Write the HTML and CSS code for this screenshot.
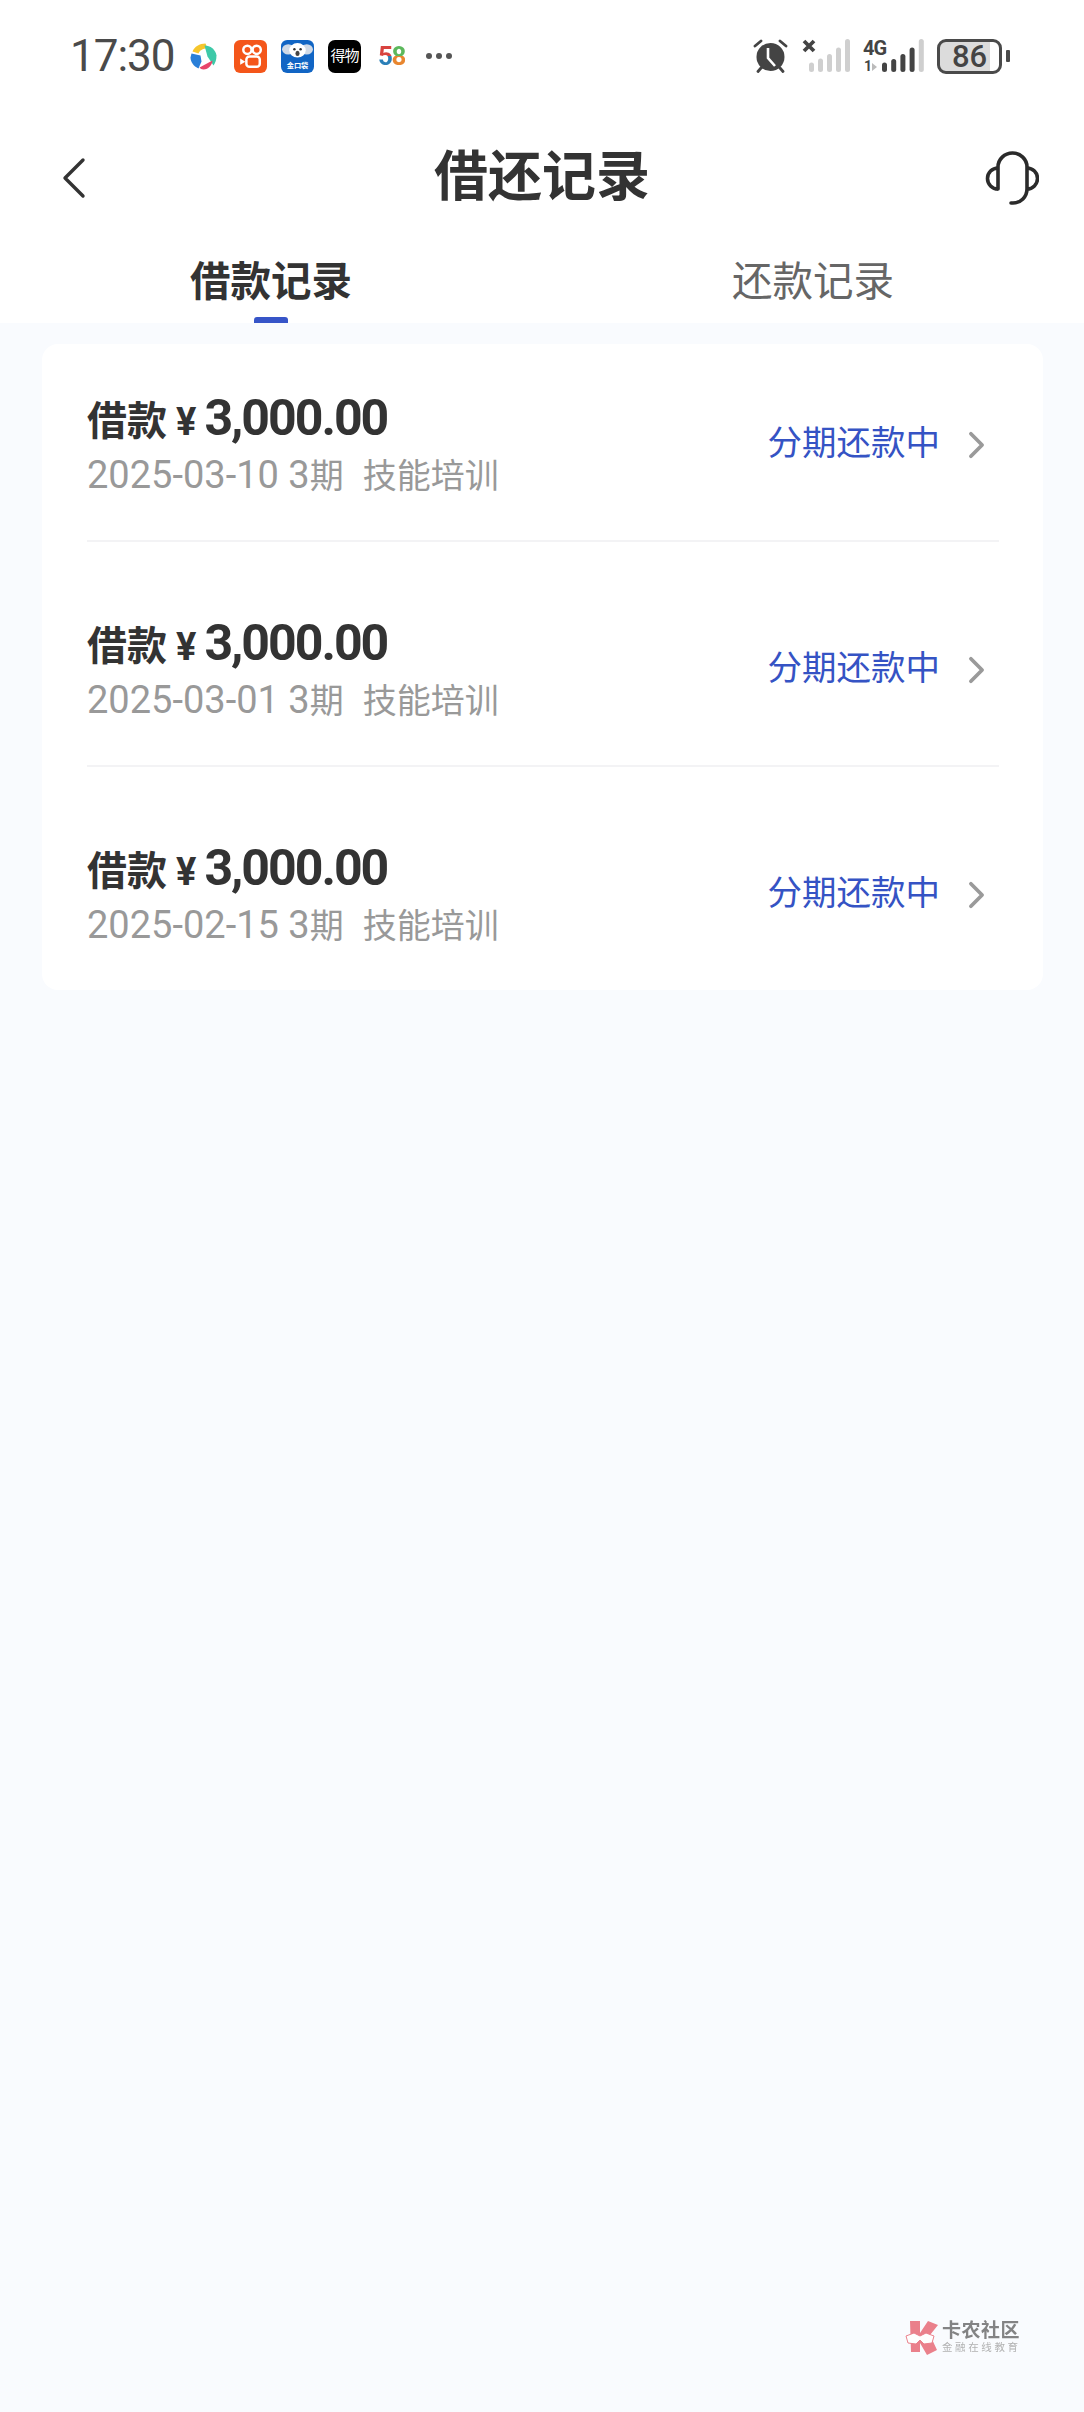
FILE: index.html
```html
<!DOCTYPE html>
<html lang="zh">
<head>
<meta charset="utf-8">
<title>借还记录</title>
<link rel="stylesheet" href="styles.css">
</head>
<body>
<div class="top">
  <div class="status">
    <span class="time">17:30</span>
    <div class="apps">
      <svg class="app" viewBox="-3.500 -3.500 33 33"><path d="M2 8C4 3 9 0 15 0l2 5c-5 0-8 2-9 5z" fill="#f6c62c"/><path d="M14 2c6 0 11 4 12 10 0 4-1 7-3 10l-6-9z" fill="#3ec9a8"/><path d="M9 24l13-7c0 4-4 9-9 9-2 0-3-1-4-2z" fill="#e8456a"/><path d="M1 10l9 2 1 6-3 7c-5-2-8-7-8-11z" fill="#2a7fd8"/></svg>
      <svg class="app" viewBox="0 0 32 32"><rect width="32" height="32" rx="6" fill="#f4561a"/><circle cx="13" cy="9.500" r="4" fill="none" stroke="#fff" stroke-width="2.400"/><circle cx="22" cy="9.500" r="4" fill="none" stroke="#fff" stroke-width="2.400"/><rect x="12" y="16" width="13" height="10" rx="3" fill="none" stroke="#fff" stroke-width="2.400"/><path d="M6 18l5 3-5 3z" fill="#fff"/></svg>
      <svg class="app" viewBox="0 0 32 32"><rect width="32" height="32" rx="6" fill="#1165c4"/><ellipse cx="7" cy="9" rx="6" ry="5" fill="#cfd9e6"/><ellipse cx="25" cy="9" rx="6" ry="5" fill="#cfd9e6"/><ellipse cx="16" cy="10" rx="8" ry="7" fill="#fff"/><circle cx="13" cy="9" r="1.200" fill="#333"/><circle cx="19" cy="9" r="1.200" fill="#333"/><ellipse cx="16" cy="13" rx="2" ry="2.500" fill="#444"/><text class="bag" x="16" y="27" text-anchor="middle">金口袋</text></svg>
      <div class="app dewu">得物</div>
      <div class="app fifty"><span class="five">5</span><span class="eight">8</span></div>
      <div class="dots"><i></i><i></i><i></i></div>
    </div>
    <div class="sys">
      <svg class="alarm" viewBox="0 0 35 34"><path d="M2 7l6-5M33 7l-6-5" stroke="#444" stroke-width="2.800" stroke-linecap="round"/><circle cx="17.500" cy="18" r="14" fill="#444"/><path d="M8 29l-3 3.500M27 29l3 3.500" stroke="#444" stroke-width="2.800" stroke-linecap="round"/><path d="M15 9v10l7 8" fill="none" stroke="#fff" stroke-width="2.600"/></svg>
      <svg class="sig1" viewBox="0 0 48 34"><path d="M2 2l10 10M12 2L2 12" stroke="#444" stroke-width="3.800"/><g fill="#cfcfcf"><rect x="7" y="23.500" width="5" height="9.500" rx="2.500"/><rect x="16" y="19.500" width="5" height="13.500" rx="2.500"/><rect x="25" y="15" width="5" height="18" rx="2.500"/><rect x="34" y="8.500" width="5" height="24.500" rx="2.500"/><rect x="43" y="0" width="5" height="33" rx="2.500"/></g></svg>
      <div class="net">
        <span class="fourg">4G</span>
        <span class="one">1</span>
        <i class="arrow"></i>
        <svg class="sig2" viewBox="0 0 42 34"><g fill="#444"><rect x="0" y="23.500" width="5" height="9.500" rx="2.500"/><rect x="9.200" y="20" width="5" height="13" rx="2.500"/><rect x="18.400" y="15" width="5" height="18" rx="2.500"/><rect x="27.600" y="8.500" width="5" height="24.500" rx="2.500"/></g><rect x="36.800" y="0" width="5" height="33" rx="2.500" fill="#cfcfcf"/></svg>
      </div>
      <div class="battery"><div class="cell">86</div><i class="nub"></i></div>
    </div>
  </div>
  <div class="nav">
    <svg class="back" viewBox="0 0 24 42"><path d="M21 3L3 21l18 18" fill="none" stroke="#333" stroke-width="3.400" stroke-linecap="round" stroke-linejoin="round"/></svg>
    <h1>借还记录</h1>
    <svg class="head" viewBox="0 0 54 55"><path d="M13 38V16a14.500 14 0 0 1 29 0v22a14 14 0 0 1-14 14h-2" fill="none" stroke="#2b2b2b" stroke-width="3.600" stroke-linecap="round"/><path d="M13 17a10.500 10.500 0 0 0 0 21M42 17a10.500 10.500 0 0 1 0 21" fill="none" stroke="#2b2b2b" stroke-width="3.600"/></svg>
  </div>
  <div class="tabs">
    <div class="tab on">借款记录<i class="bar"></i></div>
    <div class="tab">还款记录</div>
  </div>
</div>
<div class="list">
  <div class="row">
    <div class="info">
      <div class="amt"><span class="lab">借款</span><span class="yen">¥</span><span class="num">3,000.00</span></div>
      <div class="meta"><span>2025-03-10 3<span class="cn">期</span></span><span class="cn">技能培训</span></div>
    </div>
    <span class="st">分期还款中</span>
    <svg class="go" viewBox="0 0 18 30"><path d="M3 3l12 12L3 27" fill="none" stroke="#9a9a9a" stroke-width="4" stroke-linecap="round" stroke-linejoin="round"/></svg>
  </div>
  <div class="row">
    <div class="info">
      <div class="amt"><span class="lab">借款</span><span class="yen">¥</span><span class="num">3,000.00</span></div>
      <div class="meta"><span>2025-03-01 3<span class="cn">期</span></span><span class="cn">技能培训</span></div>
    </div>
    <span class="st">分期还款中</span>
    <svg class="go" viewBox="0 0 18 30"><path d="M3 3l12 12L3 27" fill="none" stroke="#9a9a9a" stroke-width="4" stroke-linecap="round" stroke-linejoin="round"/></svg>
  </div>
  <div class="row">
    <div class="info">
      <div class="amt"><span class="lab">借款</span><span class="yen">¥</span><span class="num">3,000.00</span></div>
      <div class="meta"><span>2025-02-15 3<span class="cn">期</span></span><span class="cn">技能培训</span></div>
    </div>
    <span class="st">分期还款中</span>
    <svg class="go" viewBox="0 0 18 30"><path d="M3 3l12 12L3 27" fill="none" stroke="#9a9a9a" stroke-width="4" stroke-linecap="round" stroke-linejoin="round"/></svg>
  </div>
</div>
<div class="mark">
  <svg class="mark-ico" viewBox="0 0 36 36"><path d="M5 1h10v12L23 1l10 4-8 10 7 15-10 5-7-12v9H6z" fill="#e9737f"/><path d="M1 16l8-3 6 3 6-3 8 3-2 7-8 1-4-4-4 4-8-1z" fill="#fff" stroke="#e9737f" stroke-width="1"/></svg>
  <div class="mark-t"><span class="m1">卡农社区</span><span class="m2">金融在线教育</span></div>
</div>
</body>
</html>
```
FILE: styles.css
```css
* { box-sizing: border-box; margin: 0; padding: 0; }
html, body { width: 1084px; height: 2412px; overflow: hidden; }
body { background: #f9fbfe; font-family: Roboto, "Noto Sans CJK SC", sans-serif; color: #333; position: relative; }
.top { background: #fff; height: 323px; display: flex; flex-direction: column; }
.status { height: 112px; display: flex; align-items: center; padding: 0 74px 0 70px; flex: none; }
.time { font-size: 44px; color: #4a4a4a; width: 117px; letter-spacing: -1px; }
.apps { display: flex; align-items: center; gap: 14px; }
.app { width: 33px; height: 33px; display: block; flex: none; }
.bag { font: 700 7px "Noto Sans CJK SC", sans-serif; fill: #fff; }
.dewu { background: #000; color: #fff; border-radius: 7px; font-size: 15px; line-height: 33px; text-align: center; white-space: nowrap; overflow: hidden; letter-spacing: -1px; }
.fifty { font: 700 26px/33px Roboto, sans-serif; text-align: center; letter-spacing: -1.500px; }
.five, .eight { -webkit-background-clip: text; background-clip: text; color: transparent; }
.five { background-image: linear-gradient(#d8433f 50%, #2a7fb8 50%); }
.eight { background-image: linear-gradient(#5cb85c 50%, #e8862f 50%); }
.dots { display: flex; gap: 4px; margin-left: 4px; }
.dots i { width: 6px; height: 6px; border-radius: 50%; background: #555; }
.sys { margin-left: auto; display: flex; align-items: center; }
.alarm { width: 35px; height: 34px; margin-right: 14px; }
.sig1 { width: 48px; height: 34px; margin-right: 13px; }
.net { position: relative; width: 61px; height: 34px; margin-right: 13px; }
.fourg { position: absolute; left: 0; top: -1px; font: 700 20px/20px Roboto, sans-serif; color: #444; letter-spacing: -1px; }
.one { position: absolute; left: 1px; top: 20px; font: 700 14px/14px Roboto, sans-serif; color: #444; }
.arrow { position: absolute; left: 9px; top: 24px; border-left: 5px solid #bbb; border-top: 4px solid transparent; border-bottom: 4px solid transparent; }
.sig2 { position: absolute; right: 0; top: 0; width: 42px; height: 34px; }
.battery { display: flex; align-items: center; gap: 4px; }
.cell { width: 65px; height: 35px; border: 3px solid #4a4a4a; border-radius: 9px; background: linear-gradient(90deg, #dcdcdc 85%, #fff 85%); text-align: center; font: 500 31px/29px Roboto, sans-serif; color: #444; }
.nub { width: 4px; height: 12px; background: #4a4a4a; border-radius: 1px; }
.nav { height: 118px; margin-top: 7px; display: flex; align-items: center; justify-content: space-between; padding: 0 45px 0 62px; position: relative; flex: none; }
.back { width: 24px; height: 42px; }
.nav h1 { position: absolute; left: 0; right: 0; text-align: center; font-size: 54px; font-weight: 700; color: #333; line-height: 70px; }
.head { width: 54px; height: 55px; }
.tabs { display: flex; height: 86px; flex: none; }
.tab { width: 543px; text-align: center; font-size: 40.500px; line-height: 58px; color: #666; position: relative; padding-top: 16px; }
.tab.on { color: #333; font-weight: 700; }
.bar { position: absolute; left: 50%; margin-left: -17px; top: 80px; width: 34px; height: 6px; border-radius: 3px 3px 0 0; background: #3755c8; }
.list { margin: 21px 41px 0 42px; background: #fff; border-radius: 16px; padding: 0 44px 0 45px; height: 646px; overflow: hidden; }
.row { height: 198px; display: flex; align-items: center; border-bottom: 2px solid #f3f3f5; }
.row + .row { margin-top: 27px; }
.row:last-child { border-bottom: 0; height: 196px; }
.info { flex: 1; }
.amt { display: flex; align-items: baseline; font-weight: 700; color: #333; height: 60px; margin-top: 3px; }
.lab { font-size: 40px; }
.yen { font-size: 38px; margin: 0 8px 0 9px; }
.num { font-size: 50px; font-weight: 700; letter-spacing: -2px; }
.meta { font-size: 38px; color: #999; display: flex; align-items: baseline; gap: 19px; line-height: 46px; margin-top: 3px; }
.cn { font-size: 34px; }
.st { font-size: 34.500px; color: #3553c4; margin: -4px 28px 0 0; }
.go { width: 17px; height: 28px; margin: 6px 14px 0 0; }
.mark { position: absolute; left: 905px; top: 2320px; display: flex; align-items: center; gap: 1px; opacity: .9; }
.mark-ico { width: 36px; height: 36px; }
.mark-t { display: flex; flex-direction: column; }
.m1 { font-size: 19px; font-weight: 700; line-height: 20px; color: #777; letter-spacing: .5px; }
.m2 { font-size: 10.500px; line-height: 14px; color: #aaa; letter-spacing: 2.600px; }
```
